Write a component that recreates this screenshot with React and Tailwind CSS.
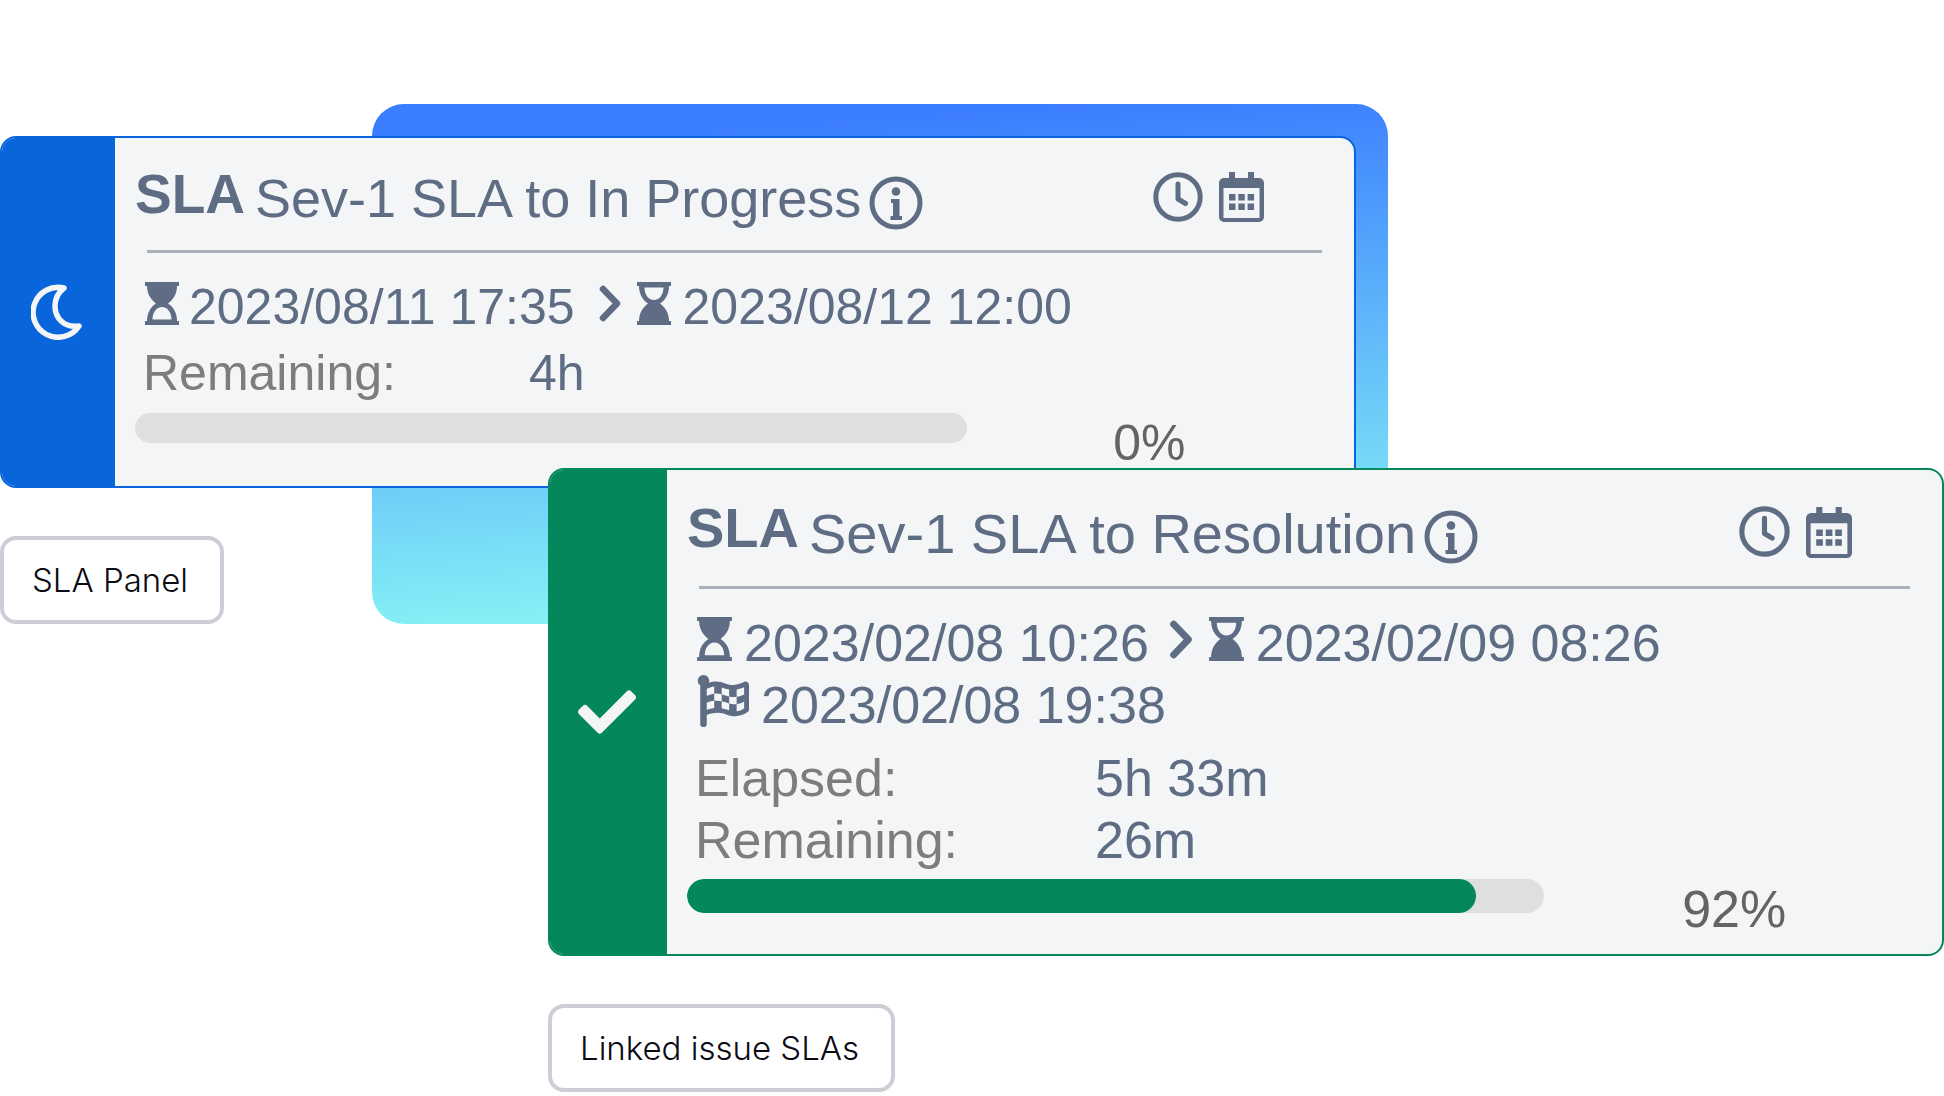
import clsx from 'clsx';
import { FaCheck, FaFlagCheckered } from 'react-icons/fa';

const MoonIcon = ({ className }) => (
  <svg viewBox="0 0 51 56" fill="none" stroke="currentColor" className={className} aria-hidden="true">
    <path
      d="M33 4A25 25 0 1 0 48 42C33 44 24 34 24 22C24 14 28 8 33 4z"
      strokeWidth="5.500"
      strokeLinejoin="round"
    />
  </svg>
);

const InfoIcon = ({ className }) => (
  <svg viewBox="0 0 54 54" fill="currentColor" className={className} aria-hidden="true">
    <circle cx="27" cy="27" r="24" fill="none" stroke="currentColor" strokeWidth="5" />
    <circle cx="27" cy="15.500" r="4.300" />
    <path d="M22 23h8.500v17h2.500v4H21.500v-4H24v-13h-2z" />
  </svg>
);

const ClockIcon = ({ className }) => (
  <svg viewBox="0 0 50 50" fill="none" stroke="currentColor" className={className} aria-hidden="true">
    <circle cx="25" cy="25" r="22.200" strokeWidth="5" />
    <path d="M25 12v15l7.500 4.500" strokeWidth="5" strokeLinecap="round" strokeLinejoin="round" />
  </svg>
);

const CalendarIcon = ({ className }) => (
  <svg viewBox="0 0 45 50" fill="currentColor" className={className} aria-hidden="true">
    <path
      fillRule="evenodd"
      d="M10 0h6v6h13V0h6v6h5a5 5 0 0 1 5 5v34a5 5 0 0 1-5 5H5a5 5 0 0 1-5-5V11a5 5 0 0 1 5-5h5zM4.500 16v30h36V16z"
    />
    <path d="M10 22h6.500v6.500h-6.500zM19.300 22h6.500v6.500h-6.500zM28.600 22h6.500v6.500h-6.500zM10 31.500h6.500v6.500h-6.500zM19.300 31.500h6.500v6.500h-6.500zM28.600 31.500h6.500v6.500h-6.500z" />
  </svg>
);

// Girado 180° representa el final del plazo
const HourglassIcon = ({ className }) => (
  <svg viewBox="0 0 34 43" fill="currentColor" className={className} aria-hidden="true">
    <path
      fillRule="evenodd"
      d="M0 0h34v4h-2c0 7-3 13-9 17.500 6 4 9 10 9 17.500h2v4H0v-4h2c0-7.500 3-13.500 9-17.500C5 17 2 11 2 4H0zM7.500 37.500h19c0-7-4-12.500-9.500-12.500s-9.500 5.500-9.500 12.500z"
    />
  </svg>
);

const ChevronIcon = ({ className }) => (
  <svg viewBox="0 0 22 37" fill="none" stroke="currentColor" className={className} aria-hidden="true">
    <path d="M4 4l14 14.500L4 33" strokeWidth="6.500" strokeLinecap="round" strokeLinejoin="round" />
  </svg>
);

// Tarjeta base: franja de color con el icono de estado y el contenido a la derecha
const SlaCard = ({ tone, icon, children }) => (
  <article
    className={clsx(
      'flex overflow-hidden rounded-2xl border-2 bg-[#f4f5f7] font-["Liberation_Sans",Arial,sans-serif] text-[#5e6c84]',
      tone === 'blue' ? 'border-[#0865db]' : 'border-[#04875b]'
    )}
  >
    <div
      className={clsx(
        'flex shrink-0 items-center justify-center pr-1 text-[#f4f5f7]',
        tone === 'blue' ? 'w-[113px] bg-[#0865db]' : 'w-[117px] bg-[#04875b]'
      )}
    >
      {icon}
    </div>
    {children}
  </article>
);

const ProgressBar = ({ value, className }) => (
  <div
    role="progressbar"
    aria-valuenow={value}
    aria-valuemin={0}
    aria-valuemax={100}
    className={clsx('overflow-hidden rounded-full bg-[#dfdfdf]', className)}
  >
    <div className="h-full rounded-full bg-[#04875b]" style={{ width: `${value}%` }} />
  </div>
);

const PanelButton = ({ children }) => (
  <button
    type="button"
    className="h-[88px] w-fit rounded-2xl border-4 border-[#cdcdd7] bg-white pr-8 pl-7 font-[Inter,sans-serif] text-[33px] font-light leading-[40px] text-[#0b0b14]"
  >
    {children}
  </button>
);

const App = () => {
  return (
    <main className="grid items-start bg-white pb-1">
      {/* Fondo degradado */}
      <div className="col-start-1 row-start-1 mt-[104px] ml-[19.14%] h-[520px] w-[52.26%] rounded-[32px] bg-[linear-gradient(176deg,#3b7dff_8%,#85f1f5_90%)]" />

      {/* SLA en curso */}
      <section className="col-start-1 row-start-1 mt-[136px] flex w-[69.73%] flex-col gap-12">
        <SlaCard tone="blue" icon={<MoonIcon className="h-14 w-[51px]" />}>
          <div className="h-[348px] min-w-0 grow pt-6.5 pl-5">
            <header className="flex h-[72px] items-start">
              <strong className="text-[55px] leading-[60px]">SLA</strong>
              <h2 className="mt-1 ml-2.5 text-[54px] leading-[60px]">Sev-1 SLA to In Progress</h2>
              <InfoIcon className="mt-3 ml-2 size-[54px]" />
              <div className="mt-2 mr-[90px] ml-auto flex gap-4">
                <ClockIcon className="size-[50px]" />
                <CalendarIcon className="h-[50px] w-[45px]" />
              </div>
            </header>
            <hr className="mt-3.5 mr-8 ml-3 border-t-[3px] border-[#acb1b9]" />
            <div className="mt-6 ml-2.5 flex h-[60px] items-center text-[50px] leading-[60px]">
              <HourglassIcon className="mb-2 h-[43px] w-[34px]" />
              <time className="ml-2.5">2023/08/11 17:35</time>
              <ChevronIcon className="mr-4 mb-2 ml-6 h-[37px] w-[22px]" />
              <HourglassIcon className="mb-2 h-[43px] w-[34px] rotate-180" />
              <time className="ml-3">2023/08/12 12:00</time>
            </div>
            <dl className="mt-1.5 ml-2 flex text-[50px] leading-[60px]">
              <dt className="w-[386px] text-[#7d7d7d]">Remaining:</dt>
              <dd>4h</dd>
            </dl>
            <div className="mt-2.5 flex items-start">
              <ProgressBar value={0} className="h-[30px] w-[68.3%]" />
              <span className="ml-[146px] text-[50px] leading-[60px] text-[#646464]">0%</span>
            </div>
          </div>
        </SlaCard>
        <PanelButton>SLA Panel</PanelButton>
      </section>

      {/* SLA resuelto */}
      <section className="col-start-1 row-start-1 mt-[468px] ml-[28.19%] flex flex-col gap-12">
        <SlaCard tone="green" icon={<FaCheck className="size-[58px]" />}>
          <div className="h-[484px] min-w-0 grow pt-7 pl-5">
            <header className="flex h-[72px] items-start">
              <strong className="text-[56px] leading-[60px]">SLA</strong>
              <h2 className="mt-1.5 ml-2.5 text-[56px] leading-[60px]">Sev-1 SLA to Resolution</h2>
              <InfoIcon className="mt-3 ml-2 size-[54px]" />
              <div className="mt-2 mr-[90px] ml-auto flex gap-4">
                <ClockIcon className="size-[51px]" />
                <CalendarIcon className="h-[53px] w-[46px]" />
              </div>
            </header>
            <hr className="mt-4 mr-8 ml-3 border-t-[3px] border-[#acb1b9]" />
            <div className="mt-6 ml-2.5 flex h-[60px] items-center text-[52px] leading-[60px]">
              <HourglassIcon className="mb-2 h-[44px] w-[35px]" />
              <time className="ml-3">2023/02/08 10:26</time>
              <ChevronIcon className="mr-4 mb-2 ml-5 h-[39px] w-[24px]" />
              <HourglassIcon className="mb-2 h-[44px] w-[35px] rotate-180" />
              <time className="ml-3">2023/02/09 08:26</time>
            </div>
            <div className="ml-2.5 flex h-[64px] items-center text-[52px] leading-[60px]">
              <FaFlagCheckered className="mb-2 size-[52px]" />
              <time className="ml-3">2023/02/08 19:38</time>
            </div>
            <dl className="mt-2.5 ml-2 grid grid-cols-[400px_1fr] text-[52px] leading-[62px]">
              <dt className="text-[#7d7d7d]">Elapsed:</dt>
              <dd>5h 33m</dd>
              <dt className="text-[#7d7d7d]">Remaining:</dt>
              <dd>26m</dd>
            </dl>
            <div className="mt-2 flex items-start">
              <ProgressBar value={92} className="h-[34px] w-[68.3%]" />
              <span className="ml-[138px] text-[52px] leading-[60px] text-[#646464]">92%</span>
            </div>
          </div>
        </SlaCard>
        <PanelButton>Linked issue SLAs</PanelButton>
      </section>
    </main>
  );
};

export default App;
